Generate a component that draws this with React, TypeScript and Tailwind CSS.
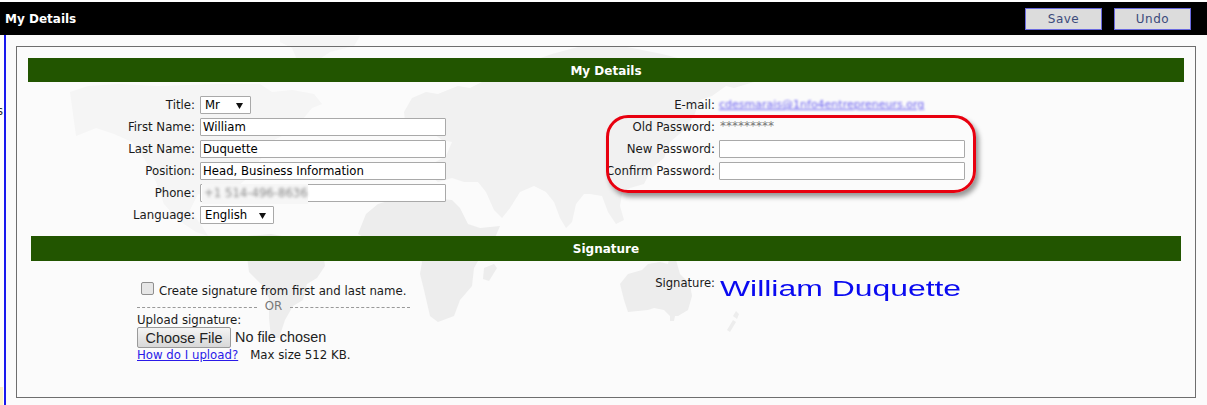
import React from "react";

const FONT = "font-['DejaVu_Sans',sans-serif]";

const inputCls =
  "flex h-[18px] w-[246px] items-center border border-[#a9a9a9] bg-white px-[2px] pt-[1px] text-[11.7px] leading-none text-black rounded-[1px]";

function Row({ label, children }: { label: string; children?: React.ReactNode }) {
  return (
    <div className="flex h-[22px] items-center">
      <div className="w-[172px] shrink-0 pt-[2px] pr-[5px] text-right text-[11.75px] whitespace-nowrap text-[#1a1a1a]">
        {label}
      </div>
      {children}
    </div>
  );
}

function PasswordRow({ label, children }: { label: string; children?: React.ReactNode }) {
  return (
    <div className="flex h-[22px] items-center">
      <div className="w-[109px] shrink-0 pt-[2px] text-right text-[11.75px] whitespace-nowrap text-[#1a1a1a]">
        {label}
      </div>
      {children}
    </div>
  );
}

function Select({ value, width }: { value: string; width: string }) {
  return (
    <div className={`flex h-[18px] items-center justify-between rounded-[1px] border border-[#a9a9a9] bg-white pt-[1px] pr-[7px] pl-[4px] text-[11.7px] ${width}`}>
      <span>{value}</span>
      <svg width="7" height="6" viewBox="0 0 7 6">
        <path d="M0 0h7L3.5 6z" fill="#111" />
      </svg>
    </div>
  );
}

// faint world map behind the form, coordinates are page pixels
function WorldMap() {
  return (
    <svg className="absolute top-[-35px] left-[-6px]" width="1207" height="405" viewBox="0 0 1207 405">
      <g fill="#f5f5f5">
        <path d="M70 92l18-6 30-2 40 2 60-2 42 0 12 8 20-2 22 4 8 10-10 4-18 22-20 10-14 20-8 14-16 14-4 14-14-4-20-4-8 16 12 16 6 10-12-4-18-12-14-16-8-22-12-24-12-16-18-8-18-6-20 8z" />
        <path d="M280 36h80l-6 10-24 6-18 12-14-2-6-14-12-6z" />
      </g>
      <g fill="#f1f1f1">
        <path d="M404 112l8-14 14-6 12 2 20-8 12 2 12-6 30-14 40-14 30-8 40 0 40 8 40 10 40 10 12 8-20 6-8-2-14 10-12 4-6 16-10 14-14 12-6 16-12 10-8 16-14 4-8 6-2 12 4 14-8 4-8-12-6-16-12-2-6 0-8 10-4 18-6 6-6-10-6-16-8-10-12-6-14 6-10 16-8 10-8-8-8-18-8-10-14 0-12-4-14 4-10-8 4-10 14-8 6-14-10-2-14-10-14 4-8-4z" />
      </g>
      <g fill="#ededed">
        <path d="M366 214l12-10 20-6 18 2 16-2 20 2 8 8 8 16 12 4 20-2-6 14-12 14-8 14-2 18-12 14-6 16-16 6-8-6-6-26-4-16 2-12-8-12-2-10-18 2-18 2-18-10z" />
        <path d="M484 268l10-4 3 4-8 13-6-2z" />
        <path d="M247 236l24-2 22 4 14 8 16 6 2 14-8 12-10 6-4 16-10 6-8 14-6 18-8 0-2-20 0-20-8-14-12-12-2-16z" />
        <path d="M620 284l8-10 14-4 6-6 12-2 8 2 2-10 6 6 4 14 10 10 2 12-4 14-10 6-8 0-6-6-10-2-6 2-20 2-4-12z" />
        <path d="M670 316l5 0-1 5-4 0z" />
        <path d="M727 330l6-10 3 2-6 10zM733 316l3-5 3 3-2 5z" />
      </g>
    </svg>
  );
}

export default function App() {
  return (
    <div className={`flex h-[405px] w-[1207px] flex-col overflow-hidden bg-white pt-[2px] ${FONT} text-black`}>
      <div className="flex h-[33px] shrink-0 items-center justify-between bg-black pr-[16px] pl-[5px]">
        <span className="text-xs font-bold text-white">My Details</span>
        <div className="flex gap-[12px] pt-[1px]">
          <button className="h-[22px] w-[77px] border border-[#6a6ae0] bg-[#dcdcdc] text-xs tracking-[0.5px] text-[#3b4a7b]">Save</button>
          <button className="h-[22px] w-[77px] border border-[#6a6ae0] bg-[#dcdcdc] text-xs tracking-[0.5px] text-[#3b4a7b]">Undo</button>
        </div>
      </div>

      <div className="flex min-h-0 flex-1">
        <div className="flex w-[4px] shrink-0 flex-col justify-between overflow-hidden text-[11.6px] text-[#333]">
          <span className="mt-[71px] ml-[-3px] leading-none">s</span>
          <div className="h-[18px] w-[3px] bg-[#fdf3c8]" />
        </div>
        <div className="w-[2px] shrink-0 bg-[#1a1aee]" />

        <div className="relative min-w-0 flex-1 overflow-hidden bg-[#fbfbfb] pt-[11px] pr-[11px] pl-[10px]">
          <WorldMap />

          <div className="relative h-[352px] border border-[#6e6e6e] px-[11px] pt-[11px]">
            <div className="flex h-[24px] items-center justify-center bg-[#225500] pt-[1px] text-xs font-bold text-white">
              My Details
            </div>

            <div className="mt-[12px] grid h-[130px] grid-cols-[578px_1fr] content-start">
              <div>
                <Row label="Title:">
                  <Select value="Mr" width="w-[51px]" />
                </Row>
                <Row label="First Name:">
                  <div className={inputCls}>William</div>
                </Row>
                <Row label="Last Name:">
                  <div className={inputCls}>Duquette</div>
                </Row>
                <Row label="Position:">
                  <div className={`${inputCls} whitespace-nowrap`}>Head, Business Information</div>
                </Row>
                <Row label="Phone:">
                  <div className={inputCls}>
                    <span className="ml-[-1px] flex h-[20px] w-[106px] items-center bg-[#f6f6f6] pl-[2px] blur-[0.5px]">
                      <span className="whitespace-nowrap text-[#888] blur-[1.4px]">+1 514-496-8636</span>
                    </span>
                  </div>
                </Row>
                <Row label="Language:">
                  <Select value="English" width="w-[74px]" />
                </Row>
              </div>

              <div>
                <PasswordRow label="E-mail:">
                  <span className="ml-[4px] pt-[1px] text-[11px] text-[#6a60f0] underline blur-[1.2px]">cdesmarais@1nfo4entrepreneurs.org</span>
                </PasswordRow>
                <PasswordRow label="Old Password:">
                  <span className="mb-[3px] ml-[5px] text-xs text-[#777]">*********</span>
                </PasswordRow>
                <PasswordRow label="New Password:">
                  <div className={`${inputCls} ml-[4px]`} />
                </PasswordRow>
                <PasswordRow label="Confirm Password:">
                  <div className={`${inputCls} ml-[4px]`} />
                </PasswordRow>
              </div>
            </div>

            <div className="mx-[3px] mt-[12px] flex h-[25px] items-center justify-center bg-[#225500] text-xs font-bold text-white">
              Signature
            </div>

            <div className="mt-[14px] grid grid-cols-[578px_1fr]">
              <div className="pt-[6px] pl-[109px]">
                <div className="flex h-[18px] items-center pl-[4px]">
                  <span className="mb-[4px] h-[13px] w-[13px] rounded-[2px] border border-[#8f8f8f] bg-[#e6e6e6]" />
                  <span className="ml-[5px] pt-[3px] text-[11.75px] whitespace-nowrap text-[#1a1a1a]">Create signature from first and last name.</span>
                </div>
                <div className="mt-[2px] flex h-[12px] w-[273px] items-center justify-between whitespace-nowrap text-[#777]">
                  <span className="w-[120px] border-t border-dashed border-[#999]" />
                  <span className="text-[11.75px]">OR</span>
                  <span className="w-[120px] border-t border-dashed border-[#999]" />
                </div>
                <div className="text-[11.75px] leading-[14px] text-[#1a1a1a]">Upload signature:</div>
                <div className="flex h-[21px] items-center">
                  <button className="h-[21px] w-[94px] rounded-[2px] border border-[#9a9a9a] bg-gradient-to-b from-[#f4f4f4] to-[#d8d8d8] font-['Liberation_Sans',sans-serif] text-[14.4px] text-[#222]">
                    Choose File
                  </button>
                  <span className="ml-[4px] font-['Liberation_Sans',sans-serif] text-[14.4px] text-[#222]">No file chosen</span>
                </div>
                <div className="flex text-[11.75px] leading-[14px]">
                  <a className="text-[#2a1ae8] underline">How do I upload?</a>
                  <span className="ml-[12px] text-[#1a1a1a]">Max size 512 KB.</span>
                </div>
              </div>

              <div className="flex items-start">
                <span className="w-[109px] text-right text-[11.6px] leading-[16px] text-[#1a1a1a]">Signature:</span>
                <span className="mt-[2px] ml-[5px] origin-left scale-x-[1.45] font-['Liberation_Sans',sans-serif] text-[22px] leading-[24px] whitespace-nowrap text-[#0a0af0]">William Duquette</span>
              </div>
            </div>

            <div className="absolute top-[68px] left-[589px] h-[78px] w-[370px] rounded-[22px] border-[3px] border-[#e8000f] shadow-[3px_4px_5px_rgba(0,0,0,0.4)]" />
          </div>
        </div>
      </div>
    </div>
  );
}
